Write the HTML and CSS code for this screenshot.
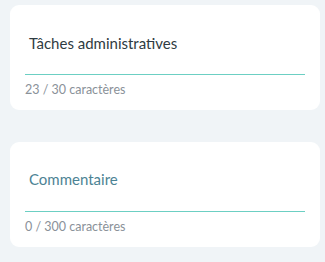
FILE: index.html
```html
<!DOCTYPE html>
<html>
<head>
  <title>Formulaire</title>
  <link rel="stylesheet" href="styles.css">
</head>
<body>
  <div class="list">
    <div class="card">
      <div class="field">
        <div class="value">Tâches administratives</div>
      </div>
      <div class="hint">23 / 30 caractères</div>
    </div>

    <div class="card">
      <div class="field">
        <div class="value placeholder">Commentaire</div>
      </div>
      <div class="hint">0 / 300 caractères</div>
    </div>
  </div>
</body>
</html>
```

FILE: styles.css
```css
body {
  margin: 0;
  background-color: #f0f4f7;
  font-family: Lato, "Open Sans", sans-serif;
}

.list {
  display: flex;
  flex-direction: column;
  gap: 32px;
  padding: 5px 5px 0 10px;
}

.card {
  background-color: #ffffff;
  border-radius: 9px;
  height: 105px;
  padding: 0 15px;
  box-sizing: border-box;
  display: flex;
  flex-direction: column;
}

.field {
  height: 70px;
  display: flex;
  align-items: flex-end;
  border-bottom: 1px solid #6ccfc3;
  box-sizing: border-box;
}

.value {
  font-size: 15px;
  color: #2f3b42;
  padding: 0 4px 22px;
}

.placeholder {
  color: #4c8394;
  padding-bottom: 23px;
}

.hint {
  font-size: 12.5px;
  color: #8a9199;
  padding-top: 7px;
}
```
